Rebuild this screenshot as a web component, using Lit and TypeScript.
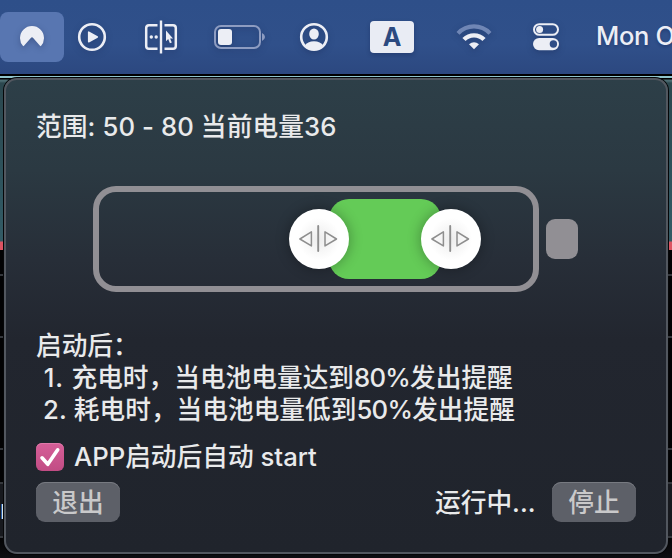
import { LitElement, html, svg, css } from "lit";
import { customElement, property } from "lit/decorators.js";

const hanFonts = css`"Noto Sans CJK SC"`;

@customElement("menu-bar")
class MenuBar extends LitElement {
  static styles = css`
    :host {
      display: grid;
      grid-template-columns: 64px 56px 82px 76px 72px 84px 80px 64px 1fr;
      box-sizing: border-box;
      height: 74px;
      background: linear-gradient(#2e4f89, #30508a 60%, #2c4880);
      color: #eceef5;
      overflow: hidden;
    }
    .slot {
      display: flex;
      align-items: center;
      justify-content: center;
    }
    .active {
      margin: 12px 0;
      border-radius: 8px;
      background: #5876b1;
    }
    svg {
      display: block;
      overflow: visible;
      filter: drop-shadow(0 2px 3px rgba(10, 20, 60, 0.28));
    }
    .letter {
      width: 44px;
      height: 32px;
      border-radius: 4px;
      background: #e9ecf4;
      color: #2c4a80;
      font: 700 25px/33px Inter, "Liberation Sans", sans-serif;
      text-align: center;
      box-shadow: 0 2px 4px rgba(10, 20, 60, 0.28);
    }
    .clock {
      justify-content: flex-start;
      padding-left: 18px;
      margin-top: -2px;
      white-space: nowrap;
      font: 500 25.5px/32px Inter, "Liberation Sans", sans-serif;
      letter-spacing: -0.35px;
      text-shadow: 0 2px 3px rgba(10, 20, 60, 0.28);
    }
  `;
  icon(width: number, height: number, body: unknown) {
    return html`<svg width=${width} height=${height} viewBox="0 0 ${width} ${height}" fill="none">${body}</svg>`;
  }
  render() {
    return html`
      <div class="slot active">
        ${this.icon(24, 24, svg`<path fill="#eceef5" d="M3.2 21.2A12 12 0 1 1 20.8 21.2Q20 20.9 19.3 20L13.2 13Q12 11.7 10.8 13L4.7 20Q4 21 3.2 21.2Z"/>`)}
      </div>
      <div class="slot">
        ${this.icon(30, 30, svg`<circle cx="15" cy="15" r="12.8" stroke="#eceef5" stroke-width="2.6"/><path d="M11.7 10.2V19.8L20.3 15Z" fill="#eceef5" stroke="#eceef5" stroke-width="1.6" stroke-linejoin="round"/>`)}
      </div>
      <div class="slot">
        ${this.icon(34, 34, svg`<path d="M13.5 5.2H5Q2.2 5.2 2.2 8V26Q2.2 28.8 5 28.8H13.5M20.5 5.2H29Q31.8 5.2 31.8 8V26Q31.8 28.8 29 28.8H20.5" stroke="#eceef5" stroke-width="2.5"/><path d="M17 0.5V33.5" stroke="#eceef5" stroke-width="2.4"/><circle cx="7.3" cy="17" r="1.7" fill="#eceef5"/><circle cx="12.2" cy="17" r="1.7" fill="#eceef5"/><path d="M22 10.5V21.2L24.2 19.1L25.9 23.2L27.8 22.4L26.1 18.5H29Z" fill="#eceef5"/>`)}
      </div>
      <div class="slot">
        ${this.icon(52, 24, svg`<rect x="1" y="1" width="45" height="22" rx="6" stroke="#8d9cc1" stroke-width="2"/><rect x="4" y="4" width="14" height="16" rx="3" fill="#eceef5"/><path d="M48 8Q51 9.5 51 12T48 16Z" fill="#8d9cc1"/>`)}
      </div>
      <div class="slot">
        ${this.icon(30, 30, svg`<circle cx="15" cy="15" r="12.8" stroke="#eceef5" stroke-width="2.6"/><ellipse cx="15" cy="12" rx="4.8" ry="5.5" fill="#eceef5"/><path d="M5.6 23.8Q8.5 19.3 15 19.3T24.4 23.8Q20.5 28 15 28T5.6 23.8Z" fill="#eceef5"/>`)}
      </div>
      <div class="slot"><div class="letter">A</div></div>
      <div class="slot">
        ${this.icon(36, 26, svg`<path d="M2 9.4Q8.6 2.4 18 2.4T34 9.4" stroke="#6f86b5" stroke-width="4.2"/><path d="M8 15.6Q12 11.4 18 11.4T28 15.6" stroke="#eceef5" stroke-width="4.4"/><path d="M13 20.3Q18 16.4 23 20.3L18 25.2Z" fill="#eceef5"/>`)}
      </div>
      <div class="slot">
        ${this.icon(28, 28, svg`<rect x="2" y="1.2" width="24" height="10.6" rx="5.3" stroke="#eceef5" stroke-width="2"/><circle cx="7.6" cy="6.5" r="3.5" fill="#eceef5"/><rect x="1" y="15" width="26" height="12.2" rx="6.1" fill="#eceef5"/><circle cx="21.4" cy="21" r="3.7" fill="#2f4d86"/>`)}
      </div>
      <div class="slot clock">Mon O</div>
    `;
  }
}

@customElement("battery-range")
class BatteryRange extends LitElement {
  @property({ type: Number }) low = 50;
  @property({ type: Number }) high = 80;
  static styles = css`
    :host {
      display: flex;
      align-items: center;
      gap: 7px;
    }
    .shell {
      position: relative;
      box-sizing: border-box;
      width: 446px;
      height: 106px;
      border: 6px solid #918f94;
      border-radius: 23px;
    }
    .fill {
      position: absolute;
      top: 7px;
      height: 80px;
      border-radius: 20px;
      background: #64cb57;
    }
    .thumb {
      position: absolute;
      top: 17px;
      width: 60px;
      height: 60px;
      border-radius: 50%;
      background: radial-gradient(circle, #ececec 0, #fcfcfc 42%, #fff 50%);
      box-shadow: 0 0 14px rgba(0, 0, 0, 0.33);
    }
    .thumb svg {
      display: block;
    }
    .cap {
      width: 32px;
      height: 40px;
      border-radius: 9px;
      background: #918f94;
    }
  `;
  center(value: number) {
    return value * 4.4;
  }
  thumb(value: number) {
    return html`<div class="thumb" style="left:${this.center(value) - 30}px"><svg width="60" height="60" viewBox="0 0 60 60" fill="none" stroke="#8e8e8e" stroke-width="1.5" stroke-linecap="round" stroke-linejoin="round">
        <path d="M29.2 17V42" stroke-width="1.9" />
        <path d="M22.4 22.9V36.9L10.9 30Z" />
        <path d="M36 22.9V36.9L47.5 30Z" />
      </svg></div>`;
  }
  render() {
    const left = this.center(this.low) + 10;
    const width = this.center(this.high) - 10 - left;
    return html`
      <div class="shell">
        <div class="fill" style="left:${left}px;width:${width}px"></div>
        ${this.thumb(this.low)}${this.thumb(this.high)}
      </div>
      <div class="cap"></div>
    `;
  }
}

@customElement("app-root")
class AppRoot extends LitElement {
  static styles = css`
    :host {
      display: flex;
      flex-direction: column;
      width: 672px;
      height: 558px;
      overflow: hidden;
      background: #000;
    }
    .desktop {
      flex: 1;
      display: grid;
      grid-template-columns: 4px 664px 4px;
      grid-template-rows: 476px 1fr;
      margin-top: 1px;
      padding-top: 3px;
      background: linear-gradient(#000 0 1px, #8fc4cb 1px 3px, #000 3px 4px, #4c6c72 5px 6px, #2b474e 8px, #2f555f 120px, #335b65 166px, #dc5362 167px 175px, #020203 175px 460px, #0d0e12 483px);
    }
    .side {
      display: grid;
      grid-template-rows: 198px 62px 112px 34px 54px 1fr;
      overflow: hidden;
    }
    .side div {
      border-bottom: 2px solid #34373c;
    }
    .side div:last-child {
      border: 0;
    }
    .side .row {
      background: #17191e;
      color: #e4e5e7;
      font: 600 26px/52px Inter, sans-serif;
      direction: rtl;
    }
    .panel {
      grid-column: 2;
      box-sizing: border-box;
      height: 476px;
      display: flex;
      flex-direction: column;
      padding: 31px 30px 30px 30px;
      border: 2px solid #52575f;
      border-radius: 13px;
      box-shadow: 0 0 0 1px #050608;
      background: linear-gradient(#2d3f48 0, #2b3942 90px, #272e38 180px, #22262f 260px, #20242c 100%);
      color: #e9eaeb;
      font: 500 25.7px/32px Inter, ${hanFonts}, sans-serif;
    }
    .range {
      height: 32px;
      letter-spacing: 0.1px;
    }
    battery-range {
      margin: 43px 0 0 57px;
    }
    .notes {
      margin-top: 38px;
    }
    .line {
      height: 32px;
      white-space: pre;
    }
    .first {
      letter-spacing: 0.9px;
    }
    .second {
      letter-spacing: 0.2px;
    }
    .percent {
      letter-spacing: -0.75px;
    }
    .auto {
      display: flex;
      align-items: center;
      gap: 10px;
      margin-top: 15px;
      height: 32px;
    }
    .check {
      width: 28px;
      height: 28px;
      border-radius: 6px;
      background: linear-gradient(#d65f98, #c14c84);
      box-shadow: inset 0 1px #df79a9;
    }
    .check svg {
      display: block;
    }
    .actions {
      display: flex;
      align-items: center;
      height: 40px;
      margin-top: 9px;
    }
    .button {
      box-sizing: border-box;
      width: 84px;
      height: 40px;
      border: 0;
      padding: 0 0 3px;
      border-radius: 9px;
      background: #5d6068;
      box-shadow: inset 0 1px #777a81;
      color: #c9c9ca;
      font: 500 25.7px/36px ${hanFonts}, sans-serif;
    }
    .state {
      margin: 2px 16.5px 0 auto;
    }
  `;
  render() {
    return html`
      <menu-bar></menu-bar>
      <div class="desktop">
        <div class="side"><div></div><div></div><div></div><div></div><div class="row">n</div><div></div></div>
        <div class="panel">
          <div class="range">范围: 50 - 80 当前电量36</div>
          <battery-range low="50" high="80"></battery-range>
          <div class="notes">
            <div class="line">启动后：</div>
            <div class="line"><span class="first"> 1. </span>充电时，当电池电量达到<span class="percent">80%</span>发出提醒</div>
            <div class="line"><span class="second"> 2. </span>耗电时，当电池电量低到<span class="percent">50%</span>发出提醒</div>
          </div>
          <div class="auto">
            <div class="check">
              <svg width="28" height="28" viewBox="0 0 28 28" fill="none"><path d="M6 14.8L11.8 21.3L21.7 6.8" stroke="#fff" stroke-width="3.6" stroke-linecap="round" stroke-linejoin="round" /></svg>
            </div>
            <span>APP启动后自动 start</span>
          </div>
          <div class="actions">
            <button class="button">退出</button>
            <span class="state">运行中...</span>
            <button class="button">停止</button>
          </div>
        </div>
        <div class="side"><div></div><div></div><div></div><div></div><div class="row"></div><div></div></div>
      </div>
    `;
  }
}
